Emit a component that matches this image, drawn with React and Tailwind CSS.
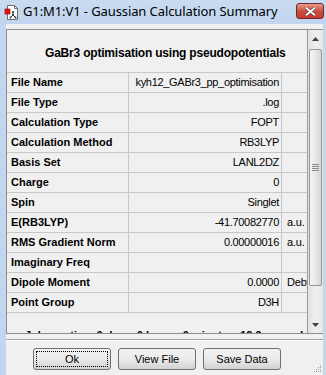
import React from 'react';

const rows = [
    ['File Name', 'kyh12_GABr3_pp_optimisation', ''],
    ['File Type', '.log', ''],
    ['Calculation Type', 'FOPT', ''],
    ['Calculation Method', 'RB3LYP', ''],
    ['Basis Set', 'LANL2DZ', ''],
    ['Charge', '0', ''],
    ['Spin', 'Singlet', ''],
    ['E(RB3LYP)', '-41.70082770', 'a.u.'],
    ['RMS Gradient Norm', '0.00000016', 'a.u.'],
    ['Imaginary Freq', '', ''],
    ['Dipole Moment', '0.0000', 'Debye'],
    ['Point Group', 'D3H', ''],
];

const AppIcon = () => (
    <svg width="16" height="17" viewBox="0 0 16 17" className="shrink-0">
        <path d="M3.5 1.5h7l3 3v11h-10z" fill="#fff" stroke="#6b6b6b" />
        <path d="M10.5 1.5v3h3" fill="none" stroke="#6b6b6b" />
        <rect x="1" y="5" width="5" height="5" fill="#e81010" stroke="#8a0000" strokeWidth="0.6" />
        <path d="M9 8v3M9 11l-2.5 2.5M9 11l2.5 2.5" stroke="#333" strokeWidth="1" />
        <circle cx="9" cy="8" r="1" fill="#333" />
        <circle cx="9" cy="11" r="1.1" fill="#333" />
        <circle cx="6.5" cy="13.5" r="1" fill="#333" />
        <circle cx="11.5" cy="13.5" r="1" fill="#333" />
    </svg>
);

const Button = ({ label, focused }) => (
    <button className="relative w-[78px] h-[22px] rounded-[3px] border border-[#707070] bg-gradient-to-b from-[#f2f2f2] via-[#ebebeb] to-[#d2d2d2] text-[11px] text-black">
        {focused && <span className="absolute inset-[2px] rounded-[1px] border border-dotted border-black" />}
        <span className="relative">{label}</span>
    </button>
);

const Arrow = ({ up }) => (
    <svg width="7" height="4" viewBox="0 0 7 4">
        <path d={up ? 'M0 4L3.5 0L7 4z' : 'M0 0L3.5 4L7 0z'} fill="#404040" />
    </svg>
);

const App = () => {
    return (
        <div className="w-[326px] h-[375px] overflow-hidden flex flex-col bg-[#c2d6ee] font-['Liberation_Sans',Arial,sans-serif] text-[11px] text-black">
            {/* title bar */}
            <div className="h-[24px] flex items-center pl-[4px] shrink-0 bg-gradient-to-b from-[#c9dbf0] to-[#c0d5ee]">
                <AppIcon />
                <span className="ml-[3px] font-['Noto_Sans',sans-serif] text-[13px] tracking-[-0.1px] text-black">G1:M1:V1 - Gaussian Calculation Summary</span>
                <div className="ml-auto mr-[2px] mb-[2px] w-[28px] h-[16px] rounded-[3px] border border-[#6e2a2a] bg-gradient-to-b from-[#e99a8a] via-[#c9503f] to-[#c23c30] flex items-center justify-center">
                    <svg width="11" height="9" viewBox="0 0 11 9">
                        <path d="M1 0.8L10 8.2M10 0.8L1 8.2" stroke="#5a2a2a" strokeWidth="3.2" />
                        <path d="M1 0.8L10 8.2M10 0.8L1 8.2" stroke="#fff" strokeWidth="2" />
                    </svg>
                </div>
            </div>

            {/* body */}
            <div className="flex-1 flex">
                <div className="w-[6px] shrink-0" />
                <div className="w-[317px] bg-[#f0f0f0] flex flex-col">
                    <div className="mt-[5px] h-[305px] flex border-l border-t border-b border-[#8e8f8f]">
                        <div className="w-[300px] overflow-hidden flex flex-col">
                            <div className="h-[42px] shrink-0 pl-[38px] pt-[16px] font-bold text-[12px] leading-[14px] tracking-[-0.2px] whitespace-nowrap">
                                GaBr3 optimisation using pseudopotentials
                            </div>
                            {rows.map(([label, value, unit]) => (
                                <div key={label} className="grid grid-cols-[122px_153px_25px] h-[20px] shrink-0 border-t border-[#c8c8c8]">
                                    <div className="border-r border-[#c8c8c8] pl-[4px] font-bold flex items-center whitespace-nowrap">{label}</div>
                                    <div className="border-r border-[#c8c8c8] pr-[2px] flex items-center justify-end whitespace-nowrap tracking-[-0.3px]">{value}</div>
                                    <div className="pl-[5px] flex items-center whitespace-nowrap overflow-hidden tracking-[-0.2px]">{unit}</div>
                                </div>
                            ))}
                            <div className="shrink-0 border-t border-[#c8c8c8] pt-[14px] flex font-bold whitespace-nowrap">
                                <span className="w-[121px] pl-[18px]">Job cpu time:</span>
                                <span>0 days&nbsp;&nbsp;0 hours&nbsp;&nbsp;0 minutes&nbsp;&nbsp;12.9 seconds.</span>
                            </div>
                        </div>
                        {/* scrollbar */}
                        <div className="w-[16px] shrink-0 flex flex-col border-l border-[#9a9a9a] bg-gradient-to-r from-[#e2e2e2] via-[#efefef] to-[#e6e6e6]">
                            <div className="h-[17px] flex items-center justify-center"><Arrow up /></div>
                            <div className="mt-[2px] h-[237px] mx-[1px] rounded-[2px] border border-[#979797] bg-gradient-to-r from-[#f4f4f4] via-[#e8e8e8] to-[#d6d6d6] flex items-center justify-center">
                                <div className="flex flex-col gap-[1px]">
                                    <div className="w-[7px] h-[1px] bg-[#8c8c8c]" />
                                    <div className="w-[7px] h-[1px] bg-[#8c8c8c]" />
                                    <div className="w-[7px] h-[1px] bg-[#8c8c8c]" />
                                    <div className="w-[7px] h-[1px] bg-[#8c8c8c]" />
                                </div>
                            </div>
                            <div className="flex-1" />
                            <div className="h-[17px] flex items-center justify-center"><Arrow /></div>
                        </div>
                    </div>

                    <div className="relative flex-1 flex flex-col">
                        <div className="mt-[5px] border-t border-[#a0a0a0] border-b border-b-white" />
                        <div className="mt-[7px] pl-[27px] flex gap-[7px]">
                            <Button label="Ok" focused />
                            <Button label="View File" />
                            <Button label="Save Data" />
                        </div>
                        <div className="absolute right-[2px] bottom-[3px] grid grid-cols-4 gap-[1px]">
                            {[0, 0, 0, 1, 0, 0, 1, 1, 0, 1, 1, 1, 1, 1, 1, 1].map((v, i) => (
                                <div key={i} className={v ? 'w-[1px] h-[1px] bg-[#a0a0a0]' : 'w-[1px] h-[1px]'} />
                            ))}
                        </div>
                    </div>
                </div>
                <div className="w-[3px] shrink-0" />
            </div>
        </div>
    );
};

export default App;
